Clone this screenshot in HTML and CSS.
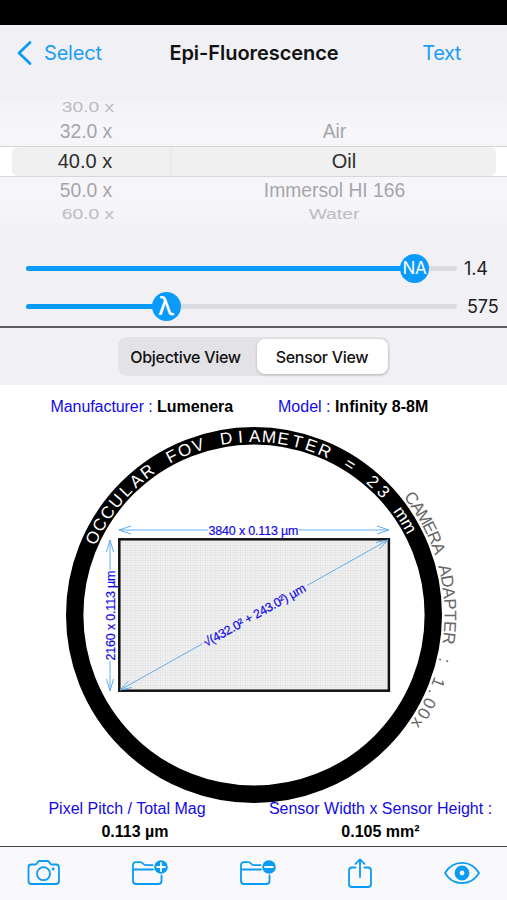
FILE: index.html
```html
<!DOCTYPE html>
<html lang="en">
  <head>
    <meta charset="UTF-8" />
    <meta name="viewport" content="width=device-width, initial-scale=1.0" />
    <title>Epi-Fluorescence</title>
    <link rel="stylesheet" href="styles.css" />
  </head>
  <body>
    <div class="status-bar"></div>
    <header class="nav">
      <a class="back">
        <svg width="15" height="24" viewBox="0 0 15 24">
          <path d="M13 1.500 L2 12 L13 22.500" fill="none" stroke="#0a9bf5" stroke-width="2.7" stroke-linecap="round" stroke-linejoin="round" />
        </svg>
        <span>Select</span>
      </a>
      <h1>Epi-Fluorescence</h1>
      <a class="text-link">Text</a>
    </header>

    <div class="picker">
      <div class="row far top"><span class="mag">30.0 x</span><span class="medium"></span></div>
      <div class="row near"><span class="mag">32.0 x</span><span class="medium">Air</span></div>
      <div class="row selected"><span class="mag">40.0 x</span><span class="medium">Oil</span></div>
      <div class="row near"><span class="mag">50.0 x</span><span class="medium">Immersol HI 166</span></div>
      <div class="row far bottom"><span class="mag">60.0 x</span><span class="medium">Water</span></div>
    </div>

    <div class="sliders">
      <div class="slider">
        <div class="track">
          <div class="fill" style="width: 90%"></div>
          <div class="thumb" style="left: 90%">NA</div>
        </div>
        <span class="value">1.4</span>
      </div>
      <div class="slider">
        <div class="track">
          <div class="fill" style="width: 32.4%"></div>
          <div class="thumb lambda" style="left: 32.4%">λ</div>
        </div>
        <span class="value wide">575</span>
      </div>
    </div>

    <div class="tabs">
      <div class="segmented">
        <button class="tab">Objective View</button>
        <button class="tab active">Sensor View</button>
      </div>
    </div>

    <main>
      <div class="camera-info">
        <span class="maker">Manufacturer : <b>Lumenera</b></span>
        <span class="model">Model : <b>Infinity 8-8M</b></span>
      </div>

      <svg class="diagram" width="507" height="376" viewBox="0 427 507 376">
        <defs>
          <pattern id="pixels" width="2.5" height="2.5" patternUnits="userSpaceOnUse">
            <rect width="2.5" height="2.5" fill="#f4f4f4" />
            <path d="M0 0.5 H2.5 M0.5 0 V2.5" stroke="#e3e3e3" stroke-width="0.8" />
          </pattern>
        </defs>
        <circle cx="254" cy="615" r="179.3" fill="none" stroke="#000" stroke-width="17.4" />
        <g id="fovText" class="fov-text"></g>
        <g id="adapterText" class="adapter-text"></g>

        <rect x="119.3" y="539.3" width="269.6" height="151.4" fill="url(#pixels)" stroke="#111" stroke-width="2.5" />

        <g class="arrows">
          <path d="M119 530 H208 M299 530 H389" />
          <path d="M131 526 L119 530 L131 534 M377 526 L389 530 L377 534" />
          <path d="M110 540 V570 M110 661 V691" />
          <path d="M106.500 552 L110 540 L113.500 552 M106.500 679 L110 691 L113.500 679" />
          <path d="M120 690 L202 644 M307 585.500 L388 540" />
          <path d="M128.500 681 L120 690 L132 687.500 M376 542.500 L388 540 L379.500 549" />
        </g>
        <g class="dims">
          <text x="208.500" y="535" textLength="90">3840 x 0.113 µm</text>
          <text transform="translate(114.500 660.500) rotate(-90)" textLength="90">2160 x 0.113 µm</text>
          <text transform="translate(206.500 647) rotate(-29.300)" textLength="115">√(432.0² + 243.0²) µm</text>
        </g>
      </svg>

      <div class="readouts">
        <div class="readout pitch">
          <span>Pixel Pitch / Total Mag</span>
          <b>0.113 µm</b>
        </div>
        <div class="readout area">
          <span>Sensor Width x Sensor Height :</span>
          <b>0.105 mm²</b>
        </div>
      </div>
    </main>

    <footer class="toolbar">
      <svg width="34" height="28" viewBox="0 0 34 28">
        <path d="M4.500 5.500 H8.500 C10 5.500 10.500 2 12.500 2 H20.500 C22.500 2 23 5.500 24.500 5.500 H29 Q32 5.500 32 8.500 V22 Q32 25 29 25 H4.500 Q1.500 25 1.500 22 V8.500 Q1.500 5.500 4.500 5.500 Z" />
        <circle cx="16.500" cy="14.700" r="6.500" />
        <circle class="solid" cx="26.200" cy="10" r="1.400" />
      </svg>
      <svg width="38" height="28" viewBox="0 0 38 28">
        <path d="M21.500 6.200 H14.500 C12.500 6.200 11.500 3.200 9.500 3.200 H5 Q2 3.200 2 6.200 V22 Q2 25 5 25 H27.500 Q30.500 25 30.500 22 V16.500 M2 10.500 H22" />
        <circle class="solid" cx="30" cy="8" r="6.800" />
        <path class="sign" d="M26 8 H34 M30 4 V12" />
      </svg>
      <svg width="38" height="28" viewBox="0 0 38 28">
        <path d="M21.500 6.200 H14.500 C12.500 6.200 11.500 3.200 9.500 3.200 H5 Q2 3.200 2 6.200 V22 Q2 25 5 25 H27.500 Q30.500 25 30.500 22 V16.500 M2 10.500 H22" />
        <circle class="solid" cx="30" cy="8" r="6.800" />
        <path class="sign" d="M26 8 H34" />
      </svg>
      <svg width="26" height="32" viewBox="0 0 26 32">
        <path d="M8.500 10.500 H5 Q2 10.500 2 13.500 V27 Q2 30 5 30 H21 Q24 30 24 27 V13.500 Q24 10.500 21 10.500 H17.500 M13 20 V2.500 M8.500 6.800 L13 2.300 L17.500 6.800" />
      </svg>
      <svg width="38" height="28" viewBox="0 0 38 28">
        <path d="M2 14 C10 0.500 28 0.500 36 14 C28 27.500 10 27.500 2 14 Z" />
        <circle class="iris" cx="19" cy="14" r="4.900" />
      </svg>
    </footer>

    <script>
      // places each character of a label at an even angle around the ring
      function drawArc(id, text, start, step, radius) {
        const group = document.getElementById(id);
        for (let i = 0; i < text.length; i++) {
          if (text[i] === " ") continue;
          const el = document.createElementNS("http://www.w3.org/2000/svg", "text");
          el.setAttribute("x", 254);
          el.setAttribute("y", 615 - radius);
          el.setAttribute("transform", `rotate(${start + i * step} 254 615)`);
          el.textContent = text[i];
          group.appendChild(el);
        }
      }

      drawArc("fovText", "OCCULAR FOV DIAMETER = 23 mm", -64.3, 4.61, 173);
      drawArc("adapterText", "CAMERA ADAPTER : 1.00x", 53.5, 3.33, 190.5);
    </script>
  </body>
</html>
```
FILE: styles.css
```css
* {
  box-sizing: border-box;
}
body {
  margin: 0;
  width: 507px;
  height: 900px;
  overflow: hidden;
  display: flex;
  flex-direction: column;
  background-color: #f0f0f5;
  font-family: "Liberation Sans", Arial, sans-serif;
}
.status-bar {
  height: 25px;
  background-color: #000;
}
.nav {
  height: 73px;
  padding: 0 46px 18px 17px;
  display: grid;
  grid-template-columns: 130px 1fr 100px;
  align-items: center;
  font-family: Inter, sans-serif;
  font-size: 20px;
  color: #1b9df5;
}
.back {
  display: flex;
  align-items: center;
  gap: 12px;
  letter-spacing: -0.2px;
}
.nav h1 {
  margin: 0;
  text-align: center;
  font-size: 20px;
  font-weight: 600;
  letter-spacing: -0.05px;
  color: #111;
}
.text-link {
  text-align: right;
  letter-spacing: -0.4px;
}
.picker {
  height: 127px;
  display: flex;
  flex-direction: column;
  background: linear-gradient(#f1f1f6, #f6f6fa 20%, #f6f6fa 80%, #f2f2f7);
}
.row {
  display: grid;
  grid-template-columns: 173px 1fr;
  height: 29px;
  align-items: center;
  text-align: center;
  font-size: 19.3px;
  color: #a5a5a9;
}
.near {
  padding-top: 1px;
}
.mag {
  padding-right: 1px;
}
.medium {
  padding-right: 11px;
}
.far {
  height: 19px;
  color: #bcbcc0;
}
.far.bottom {
  height: 20px;
}
.far span {
  transform: translateY(-2px) scaleY(0.76);
}
.far .mag {
  padding-left: 4px;
}
.far .medium {
  padding-right: 12px;
}
.selected {
  height: 31px;
  padding: 0 11px 0 12px;
  grid-template-columns: 161px 1fr;
  border-top: 1px solid #d6d6d8;
  border-bottom: 1px solid #d6d6d8;
  background-color: #fff;
  font-size: 20px;
  color: #2d2d2e;
}
.selected span {
  height: 29px;
  line-height: 29px;
  background-color: #f0f0f1;
}
.selected .mag {
  padding-right: 11px;
  border-right: 4px solid #ebebec;
  border-radius: 6px 0 0 6px;
}
.selected .medium {
  padding-left: 19px;
  padding-right: 0;
  border-radius: 0 6px 6px 0;
}
.sliders {
  height: 103px;
  padding-top: 24px;
  border-bottom: 2px solid #5d5d62;
}
.slider {
  display: flex;
  align-items: center;
  height: 38.5px;
  padding-left: 26px;
}
.track {
  position: relative;
  width: 431px;
  height: 5px;
  border-radius: 3px;
  background-color: #dadadf;
}
.fill {
  height: 5px;
  border-radius: 3px;
  background-color: #0a9bfa;
}
.thumb {
  position: absolute;
  top: -12px;
  width: 29px;
  height: 29px;
  margin-left: -14px;
  border-radius: 50%;
  background-color: #0a9bfa;
  color: #fff;
  font-family: Inter, sans-serif;
  font-size: 17px;
  line-height: 29px;
  text-align: center;
  letter-spacing: -0.3px;
}
.lambda {
  font-size: 25px;
  font-weight: 500;
  line-height: 28px;
}
.value {
  padding-left: 7px;
  font-family: Inter, sans-serif;
  font-size: 18px;
  letter-spacing: -0.1px;
  color: #1c1c1e;
}
.wide {
  padding-left: 10px;
}
.tabs {
  height: 57px;
  display: flex;
  justify-content: center;
  align-items: center;
}
.segmented {
  display: flex;
  width: 272px;
  height: 39px;
  padding: 2px;
  border-radius: 9px;
  background-color: #e3e3e7;
}
.tab {
  width: 137px;
  padding: 0 5px 0 0;
  border: 0;
  border-radius: 8px;
  background: none;
  font-family: Inter, sans-serif;
  font-size: 16px;
  font-weight: 500;
  letter-spacing: -0.3px;
  color: #111;
}
.tab.active {
  width: 131px;
  padding: 0;
  background-color: #fff;
  box-shadow: 0 1px 3px rgba(0, 0, 0, 0.2);
}
main {
  height: 461px;
  background-color: #fff;
  color: #120ae8;
  font-size: 16px;
}
b {
  color: #000;
}
.camera-info {
  display: flex;
  height: 42px;
  padding-left: 50.5px;
  line-height: 43px;
  white-space: nowrap;
}
.maker {
  width: 227.5px;
  letter-spacing: -0.07px;
}
.diagram {
  display: block;
}
.fov-text,
.adapter-text {
  font-size: 17px;
  text-anchor: middle;
  fill: #fff;
}
.adapter-text {
  fill: #666;
}
.arrows {
  fill: none;
  stroke: #62aef2;
  stroke-width: 1;
}
.dims {
  font-size: 12.5px;
  fill: #120ae8;
  stroke: #120ae8;
  stroke-width: 0.2;
}
.readouts {
  display: flex;
  height: 43px;
}
.readout {
  display: flex;
  flex-direction: column;
  align-items: center;
  line-height: 23px;
  margin-top: -6px;
  white-space: nowrap;
}
.pitch {
  width: 254px;
}
.pitch b {
  padding-left: 16px;
}
.area {
  width: 253px;
}
.toolbar {
  height: 54px;
  padding: 0 26px 1px 27px;
  display: flex;
  justify-content: space-between;
  align-items: center;
  border-top: 1px solid #444;
  background-color: #f9f9fc;
}
.toolbar svg {
  fill: none;
  stroke: #0a9bf5;
  stroke-width: 1.8;
  stroke-linecap: round;
  stroke-linejoin: round;
}
.toolbar .solid {
  fill: #0a9bf5;
  stroke: none;
}
.toolbar .sign {
  stroke: #fff;
}
.toolbar .iris {
  stroke-width: 5;
}
```
